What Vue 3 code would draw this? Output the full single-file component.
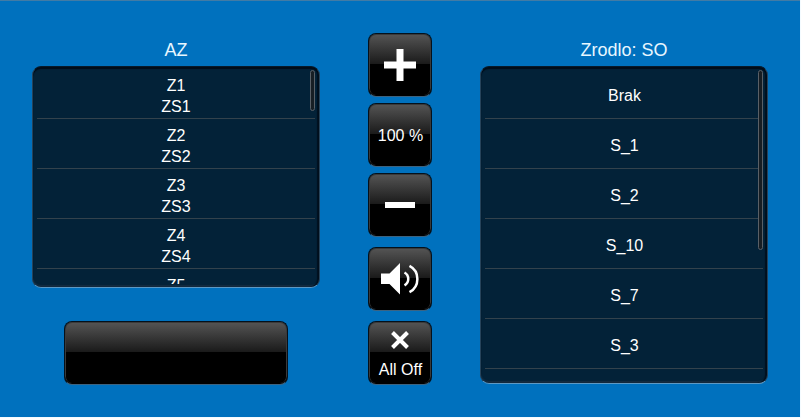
<script setup>
const zones = [['Z1', 'ZS1'], ['Z2', 'ZS2'], ['Z3', 'ZS3'], ['Z4', 'ZS4'], ['Z5', '']]
const sources = ['Brak', 'S_1', 'S_2', 'S_10', 'S_7', 'S_3']
</script>

<template>
  <main class="screen">
    <section class="column zones">
      <h2 class="title">AZ</h2>
      <div class="panel zone-panel">
        <ul class="list">
          <li v-for="zone in zones" :key="zone[0]" class="row">
            <span>{{ zone[0] }}</span>
            <span>{{ zone[1] }}</span>
          </li>
        </ul>
        <div class="thumb short"></div>
      </div>
      <button class="key wide" aria-label="Status"></button>
    </section>

    <section class="controls">
      <button class="key" aria-label="Volume up">
        <svg width="32" height="32" viewBox="0 0 32 32"><path d="M12.5 0h7v12.5H32v7H19.5V32h-7V19.5H0v-7h12.5z" fill="#fff" /></svg>
      </button>
      <button class="key level">100 %</button>
      <button class="key" aria-label="Volume down">
        <svg width="30" height="6" viewBox="0 0 30 6"><path d="M0 0h30v6H0z" fill="#fff" /></svg>
      </button>
      <button class="key mute" aria-label="Mute">
        <svg width="38" height="32" viewBox="0 0 38 32">
          <path d="M0 10.5h8.5L19 0v31.5L8.5 21H0z" fill="#fff" />
          <path d="M23.5 9.5c5 2.8 5 10 0 12.8M28.5 2.8c10.5 5.5 10.5 20.7 0 26.4" fill="none" stroke="#fff" stroke-width="2.5" />
        </svg>
      </button>
      <button class="key off">
        <svg width="18" height="18" viewBox="0 0 18 18"><path d="M1.5 1.5l15 15M16.5 1.5l-15 15" stroke="#fff" stroke-width="4" /></svg>
        <span class="caption">All Off</span>
      </button>
    </section>

    <section class="column">
      <h2 class="title">Zrodlo: SO</h2>
      <div class="panel source-panel">
        <ul class="list">
          <li v-for="source in sources" :key="source" class="row">{{ source }}</li>
        </ul>
        <div class="thumb long"></div>
      </div>
    </section>
  </main>
</template>

<style>
body {
  margin: 0;
  background: #f4fbff;
}
</style>

<style scoped>
.screen {
  box-sizing: border-box;
  width: 800px;
  height: 417px;
  padding: 0 32px;
  display: grid;
  grid-template-columns: 288px 64px 288px;
  column-gap: 48px;
  align-items: start;
  overflow: hidden;
  background: #0071be;
  border-top: 1px solid #427ba5;
  font-family: "Liberation Sans", Arial, sans-serif;
  color: #fff;
}
.column {
  display: flex;
  flex-direction: column;
  align-items: center;
  padding-top: 37px;
}
.title {
  margin: 0 0 4px;
  height: 24px;
  line-height: 24px;
  font-size: 18px;
  font-weight: 400;
  color: #e8f7ff;
}
.panel {
  position: relative;
  box-sizing: border-box;
  width: 288px;
  padding: 2px 4px 3px;
  border: 1px solid #26435a;
  border-top-color: #06192a;
  border-bottom-color: #5d99c4;
  border-radius: 9px;
  background: #032238;
  box-shadow: inset 0 2px 1px #000c18, inset -2px 0 1px #00101e, inset 0 -2px 1px #142c40;
}
.zone-panel {
  height: 222px;
}
.source-panel {
  height: 318px;
}
.list {
  height: 100%;
  margin: 0;
  padding: 0;
  list-style: none;
  overflow: hidden;
}
.row {
  box-sizing: border-box;
  height: 50px;
  display: flex;
  flex-direction: column;
  align-items: center;
  justify-content: flex-start;
  border-bottom: 1px solid #33424c;
  font-size: 16px;
  line-height: 21px;
}
.zone-panel .row {
  padding-top: 6px;
}
.source-panel .row {
  padding: 16px 0 0 1px;
}
.thumb {
  position: absolute;
  top: 3px;
  right: 4px;
  box-sizing: border-box;
  width: 5px;
  border: 1px solid #596067;
  border-radius: 3px;
  background: #171e24;
}
.short {
  height: 41px;
}
.long {
  height: 180px;
}
.controls {
  padding-top: 32px;
  display: grid;
  grid-template-rows: repeat(5, 64px);
  row-gap: 6px;
}
.mute {
  margin-top: 4px;
}
.off {
  margin-top: 8px;
}
.key {
  box-sizing: border-box;
  width: 64px;
  height: 64px;
  padding: 0;
  display: flex;
  align-items: center;
  justify-content: center;
  border: 1px solid #04111c;
  border-bottom-color: #3c6381;
  border-radius: 8px;
  background: linear-gradient(#555 0, #1a1a1a 30px, #000 30px);
  box-shadow: inset 0 -1px #000, inset 0 0 0 1px #3a3a3a;
  color: #fff;
  font: 16px "Liberation Sans", Arial, sans-serif;
}
.wide {
  width: 224px;
  margin-top: 33px;
}
.level {
  padding: 1px 0 0 1px;
}
.off {
  flex-direction: column;
  gap: 12px;
  padding-top: 3px;
}
.caption {
  padding-left: 1px;
}
</style>
